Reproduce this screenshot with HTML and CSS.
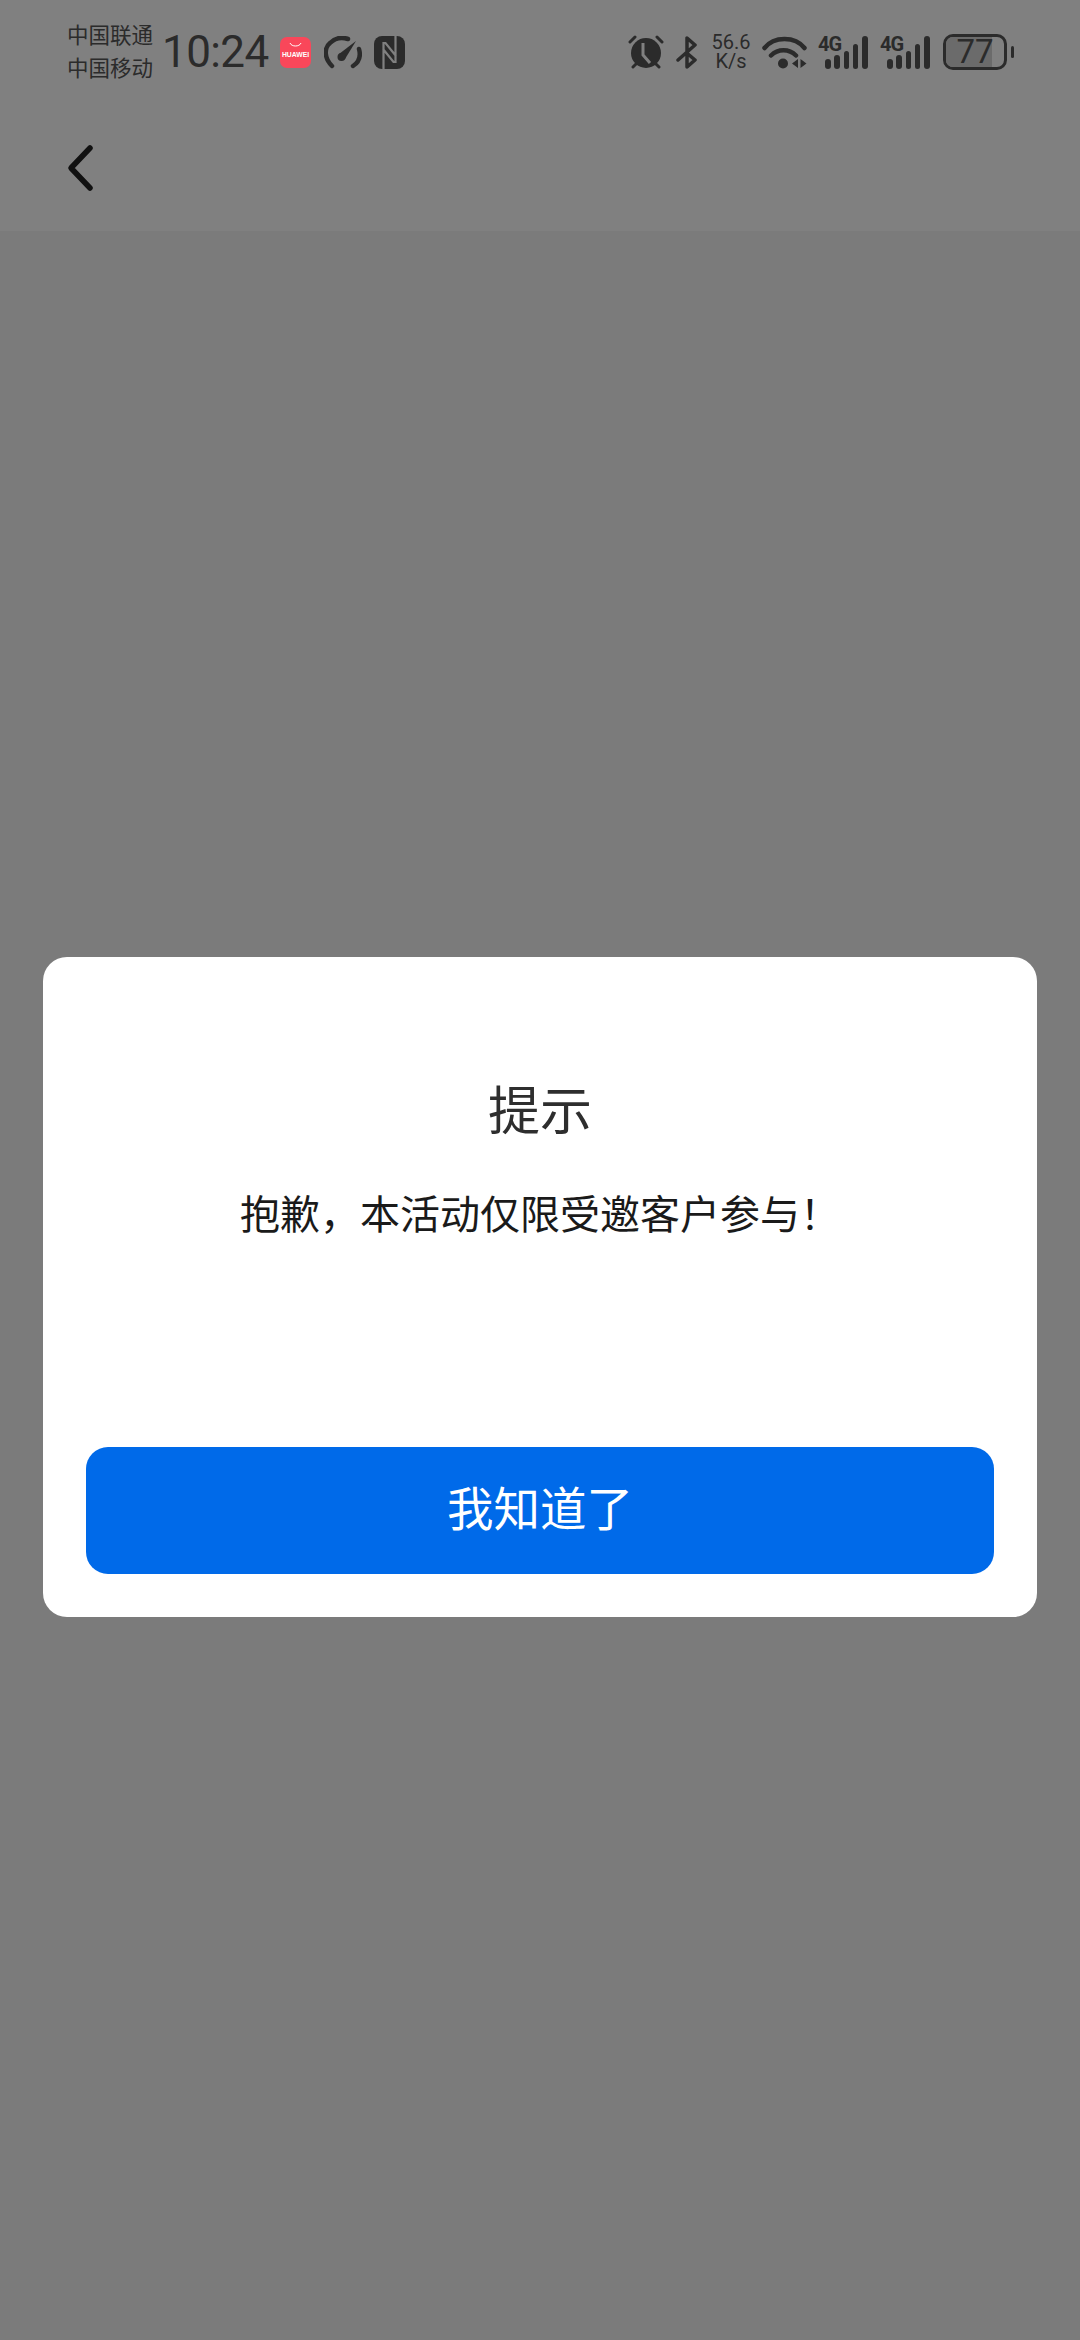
FILE: index.html
```html
<!DOCTYPE html>
<html lang="zh-CN">
<head>
<meta charset="utf-8">
<title>提示</title>
<link rel="stylesheet" href="styles.css">
</head>
<body>
<div class="page">
  <header class="topbar">
    <div class="status">
      <div class="status-left">
        <div class="carriers"><span>中国联通</span><span>中国移动</span></div>
        <span class="time">10:24</span>
        <svg class="ic-app" viewBox="0 0 31 31"><rect width="31" height="31" rx="7" fill="#f9475a"/><path d="M10 6c1.500 4 9.500 4 11 0" fill="none" stroke="#fff" stroke-width="1"/><text x="15.500" y="20" text-anchor="middle" class="ic-app-text">HUAWEI</text></svg>
        <svg class="ic-speed" viewBox="0 0 38 33"><path d="M8 30C0 22 0 12 6 7 11 2 18 1 24 3M35 13c2 7 0 13-6 17" fill="none" stroke="#2b2b2b" stroke-width="4.500" stroke-linecap="round"/><path d="M32 5 21 23l-6-5z" fill="#2b2b2b"/><circle cx="17.500" cy="21" r="4" fill="#2b2b2b"/></svg>
        <svg class="ic-nfc" viewBox="0 0 31 33"><rect width="31" height="33" rx="8" fill="#2b2b2b"/><path d="M9.500 33V7h2L22 20M21.500 0V26h-2L9 13" fill="none" stroke="#808080" stroke-width="2.200"/></svg>
      </div>
      <div class="status-right">
        <svg class="ic-alarm" viewBox="0 0 36 34"><path d="M2 7 7 2M34 7l-5-5M5 32l3-3M31 32l-3-3" stroke="#2b2b2b" stroke-width="3" stroke-linecap="round"/><circle cx="18" cy="18" r="15" fill="#2b2b2b"/><path d="M15 8v12l7 8" fill="none" stroke="#808080" stroke-width="3"/></svg>
        <svg class="ic-bt" viewBox="0 0 21 33"><path d="M2 24 19 9 11 2v29l8-7-7-6" fill="none" stroke="#2b2b2b" stroke-width="3.500" stroke-linejoin="round" stroke-linecap="round"/></svg>
        <div class="speed"><span>56.6</span><span>K/s</span></div>
        <svg class="ic-wifi" viewBox="0 0 45 33"><path d="M2.500 12C12 0 33 0 42.500 12M9 19.500c7-7 18-7 25 0" fill="none" stroke="#2b2b2b" stroke-width="4.500" stroke-linecap="round"/><circle cx="21" cy="27.500" r="5" fill="#2b2b2b"/><path d="M36 23v9l-6-4.500zM38.500 23v9l6-4.500z" fill="#2b2b2b"/></svg>
        <div class="signal"><span class="net">4G</span><i class="b1"></i><i class="b2"></i><i class="b3"></i><i class="b4"></i><i class="b5"></i></div>
        <div class="signal signal-second"><span class="net">4G</span><i class="b1"></i><i class="b2"></i><i class="b3"></i><i class="b4"></i><i class="b5"></i></div>
        <div class="battery"><div class="battery-body"><div class="battery-fill"></div><span class="battery-num">77</span></div><div class="battery-tip"></div></div>
      </div>
    </div>
    <div class="nav">
      <svg class="ic-back" viewBox="0 0 30 52"><path d="M23 6 4 26l19 20" fill="none" stroke="#111" stroke-width="5.500" stroke-linecap="round" stroke-linejoin="round"/></svg>
    </div>
  </header>
  <main class="content">
    <section class="dialog">
      <h1 class="dialog-title">提示</h1>
      <p class="dialog-text">抱歉&#xFF0C;本活动仅限受邀客户参与&#xFF01;</p>
      <button class="dialog-btn">我知道了</button>
    </section>
  </main>
</div>
</body>
</html>
```
FILE: styles.css
```css
* { box-sizing: border-box; }
html, body { margin: 0; padding: 0; }
body { font-family: "Noto Sans CJK SC", "Noto Sans", sans-serif; }
.page { width: 1080px; height: 2340px; display: flex; flex-direction: column; background: #7b7b7b; overflow: hidden; }
.topbar { height: 231px; background: #808080; flex: none; }
.status { height: 104px; padding: 0 66px 0 67px; display: flex; justify-content: space-between; align-items: center; color: #2b2b2b; }
.status-left, .status-right { display: flex; align-items: center; }
.carriers { display: flex; flex-direction: column; font-size: 21.500px; line-height: 33px; width: 95px; margin-bottom: 4px; }
.time { font-family: Roboto, sans-serif; font-size: 44px; line-height: 52px; letter-spacing: -.6px; width: 118px; color: #2b2b2b; }
.ic-app { width: 31px; height: 31px; margin-right: 13px; }
.ic-app-text { font-family: "Liberation Sans", sans-serif; font-size: 6.800px; font-weight: 700; fill: #fff; }
.ic-speed { width: 38px; height: 33px; margin-right: 12px; }
.ic-nfc { width: 31px; height: 33px; }
.ic-alarm { width: 36px; height: 34px; margin-right: 12px; }
.ic-bt { width: 21px; height: 33px; margin-right: 14px; }
.speed { display: flex; flex-direction: column; align-items: center; width: 40px; font-family: Roboto, sans-serif; font-size: 20px; line-height: 19px; margin-right: 11px; white-space: nowrap; }
.ic-wifi { width: 45px; height: 33px; margin-right: 11px; }
.signal { position: relative; width: 50px; height: 33px; margin-right: 12px; display: flex; align-items: flex-end; gap: 3.800px; padding-left: 7px; }
.signal-second { margin-right: 13px; }
.net { position: absolute; left: 0; top: -2px; font-family: Roboto, sans-serif; font-weight: 700; font-size: 20px; line-height: 20px; letter-spacing: -1px; }
.signal i { display: block; width: 5.500px; background: #2b2b2b; border-radius: 3px; }
.b1 { height: 10px; } .b2 { height: 14px; } .b3 { height: 18px; } .b4 { height: 25px; } .b5 { height: 33px; }
.battery { display: flex; align-items: center; }
.battery-body { position: relative; width: 64px; height: 36px; border: 3px solid #2b2b2b; border-radius: 10px; }
.battery-fill { height: 100%; width: 80%; background: #6b6b6b; border-radius: 7px 0 0 7px; }
.battery-num { position: absolute; inset: 0; text-align: center; font-family: Roboto, sans-serif; font-size: 33px; line-height: 30px; color: #2b2b2b; }
.battery-tip { width: 3px; height: 12px; margin-left: 4px; background: #2b2b2b; border-radius: 2px; }
.nav { height: 127px; padding: 38px 0 0 67px; }
.ic-back { display: block; width: 30px; height: 52px; }
.content { flex: 1; padding: 726px 43px 0; }
.dialog { height: 660px; background: #fff; border-radius: 24px; padding: 113px 43px 43px; display: flex; flex-direction: column; align-items: center; }
.dialog-title { margin: 0; font-size: 52px; font-weight: 400; line-height: 76px; color: #2e2e2e; }
.dialog-text { margin: 37px 0 0; font-size: 40px; line-height: 58px; color: #1a1a1a; flex: 1; }
.dialog-btn { width: 100%; height: 127px; border: 0; border-radius: 22px; background: #006ae9; color: #fff; font-family: inherit; font-size: 46.500px; padding: 0 0 10px; }
```
